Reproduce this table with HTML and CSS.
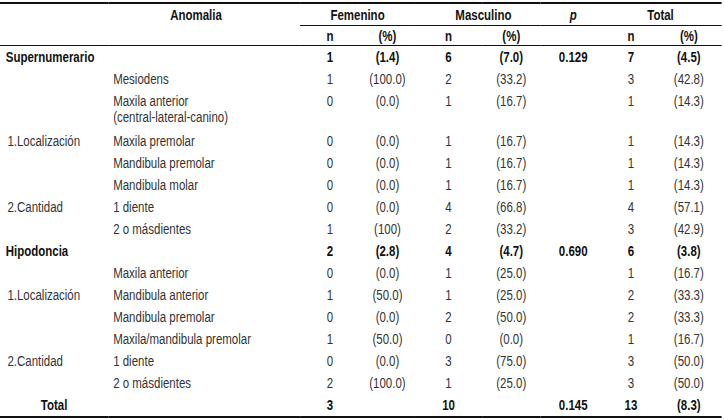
FILE: index.html
```html
<!DOCTYPE html>
<html lang="es">
<head>
<meta charset="utf-8">
<title>Anomalía</title>
<link rel="stylesheet" href="styles.css">
</head>
<body>
<div class="frame">
<table class="tbl">
  <colgroup>
    <col class="c-lab"><col class="c-sub"><col class="c-fn"><col class="c-fp"><col class="c-mn"><col class="c-mp"><col class="c-p"><col class="c-tn"><col class="c-tp">
  </colgroup>
  <thead>
    <tr class="h1">
      <th colspan="2" rowspan="2" class="anom">Anomalia</th>
      <th colspan="2" class="grp">Femenino</th>
      <th colspan="2" class="grp masc">Masculino</th>
      <th class="grp"><i>p</i></th>
      <th colspan="2" class="grp tot">Total</th>
    </tr>
    <tr class="h2">
      <th>n</th><th>(%)</th><th>n</th><th>(%)</th><th></th><th>n</th><th>(%)</th>
    </tr>
  </thead>
  <tbody>
    <tr class="b"><td class="lab">Supernumerario</td><td></td><td>1</td><td>(1.4)</td><td>6</td><td>(7.0)</td><td>0.129</td><td>7</td><td>(4.5)</td></tr>
    <tr><td></td><td class="sub">Mesiodens</td><td>1</td><td>(100.0)</td><td>2</td><td>(33.2)</td><td></td><td>3</td><td>(42.8)</td></tr>
    <tr class="dbl"><td></td><td class="sub">Maxila anterior<br>(central-lateral-canino)</td><td>0</td><td>(0.0)</td><td>1</td><td>(16.7)</td><td></td><td>1</td><td>(14.3)</td></tr>
    <tr><td class="lab2">1.Localización</td><td class="sub">Maxila premolar</td><td>0</td><td>(0.0)</td><td>1</td><td>(16.7)</td><td></td><td>1</td><td>(14.3)</td></tr>
    <tr><td></td><td class="sub">Mandibula premolar</td><td>0</td><td>(0.0)</td><td>1</td><td>(16.7)</td><td></td><td>1</td><td>(14.3)</td></tr>
    <tr><td></td><td class="sub">Mandibula molar</td><td>0</td><td>(0.0)</td><td>1</td><td>(16.7)</td><td></td><td>1</td><td>(14.3)</td></tr>
    <tr><td class="lab2">2.Cantidad</td><td class="sub">1 diente</td><td>0</td><td>(0.0)</td><td>4</td><td>(66.8)</td><td></td><td>4</td><td>(57.1)</td></tr>
    <tr><td></td><td class="sub">2 o másdientes</td><td>1</td><td>(100)</td><td>2</td><td>(33.2)</td><td></td><td>3</td><td>(42.9)</td></tr>
    <tr class="b"><td class="lab">Hipodoncia</td><td></td><td>2</td><td>(2.8)</td><td>4</td><td>(4.7)</td><td>0.690</td><td>6</td><td>(3.8)</td></tr>
    <tr><td></td><td class="sub">Maxila anterior</td><td>0</td><td>(0.0)</td><td>1</td><td>(25.0)</td><td></td><td>1</td><td>(16.7)</td></tr>
    <tr><td class="lab2">1.Localización</td><td class="sub">Mandibula anterior</td><td>1</td><td>(50.0)</td><td>1</td><td>(25.0)</td><td></td><td>2</td><td>(33.3)</td></tr>
    <tr><td></td><td class="sub">Mandibula premolar</td><td>0</td><td>(0.0)</td><td>2</td><td>(50.0)</td><td></td><td>2</td><td>(33.3)</td></tr>
    <tr><td></td><td class="sub">Maxila/mandibula premolar</td><td>1</td><td>(50.0)</td><td>0</td><td>(0.0)</td><td></td><td>1</td><td>(16.7)</td></tr>
    <tr><td class="lab2">2.Cantidad</td><td class="sub">1 diente</td><td>0</td><td>(0.0)</td><td>3</td><td>(75.0)</td><td></td><td>3</td><td>(50.0)</td></tr>
    <tr><td></td><td class="sub">2 o másdientes</td><td>2</td><td>(100.0)</td><td>1</td><td>(25.0)</td><td></td><td>3</td><td>(50.0)</td></tr>
    <tr class="b last"><td class="labc">Total</td><td></td><td>3</td><td></td><td>10</td><td></td><td>0.145</td><td>13</td><td>(8.3)</td></tr>
  </tbody>
</table>
</div>
</body>
</html>
```
FILE: styles.css
```css
html, body {
  margin: 0;
  padding: 0;
  background: #ffffff;
  overflow: hidden;
}

body {
  padding-top: 2px;
  font-family: "Liberation Sans", Arial, sans-serif;
  font-size: 14px;
  color: #333333;
}

.frame {
  width: 722px;
  overflow: hidden;
}

/* Liberation Sans narrowed horizontally to mimic a condensed face */
.tbl {
  width: 880px;
  border-collapse: collapse;
  table-layout: fixed;
  border-top: 2px solid #111;
  border-bottom: 2px solid #111;
  transform: scaleX(0.82);
  transform-origin: 0 0;
}

.c-lab { width: 132px; }
.c-sub { width: 234px; }
.c-fn { width: 73px; }
.c-fp { width: 67px; }
.c-mn { width: 82px; }
.c-mp { width: 71px; }
.c-p { width: 80px; }
.c-tn { width: 61px; }
.c-tp { width: 80px; }

.tbl th,
.tbl td {
  padding: 3px 0;
  line-height: 16px;
  text-align: center;
  vertical-align: top;
  white-space: nowrap;
}

.tbl th {
  font-weight: bold;
  color: #111;
}

.h1 th {
  padding: 3px 0 2px;
}

.h1 .anom {
  padding-left: 112px;
  border-bottom: 1px solid #111;
}

.h1 .grp {
  border-bottom: 1px solid #111;
}

.h1 .masc {
  padding-left: 14px;
}

.h1 .tot {
  padding-right: 8px;
}

.h2 th {
  padding: 2px 0 1px;
  border-bottom: 1px solid #111;
}

.tbl td.lab {
  text-align: left;
  padding-left: 7px;
}

.tbl td.lab2 {
  text-align: left;
  padding-left: 9px;
}

.tbl td.sub {
  text-align: left;
  padding-left: 6px;
}

.b td {
  font-weight: bold;
  color: #111;
}

.dbl td {
  padding-bottom: 5px;
}
```
